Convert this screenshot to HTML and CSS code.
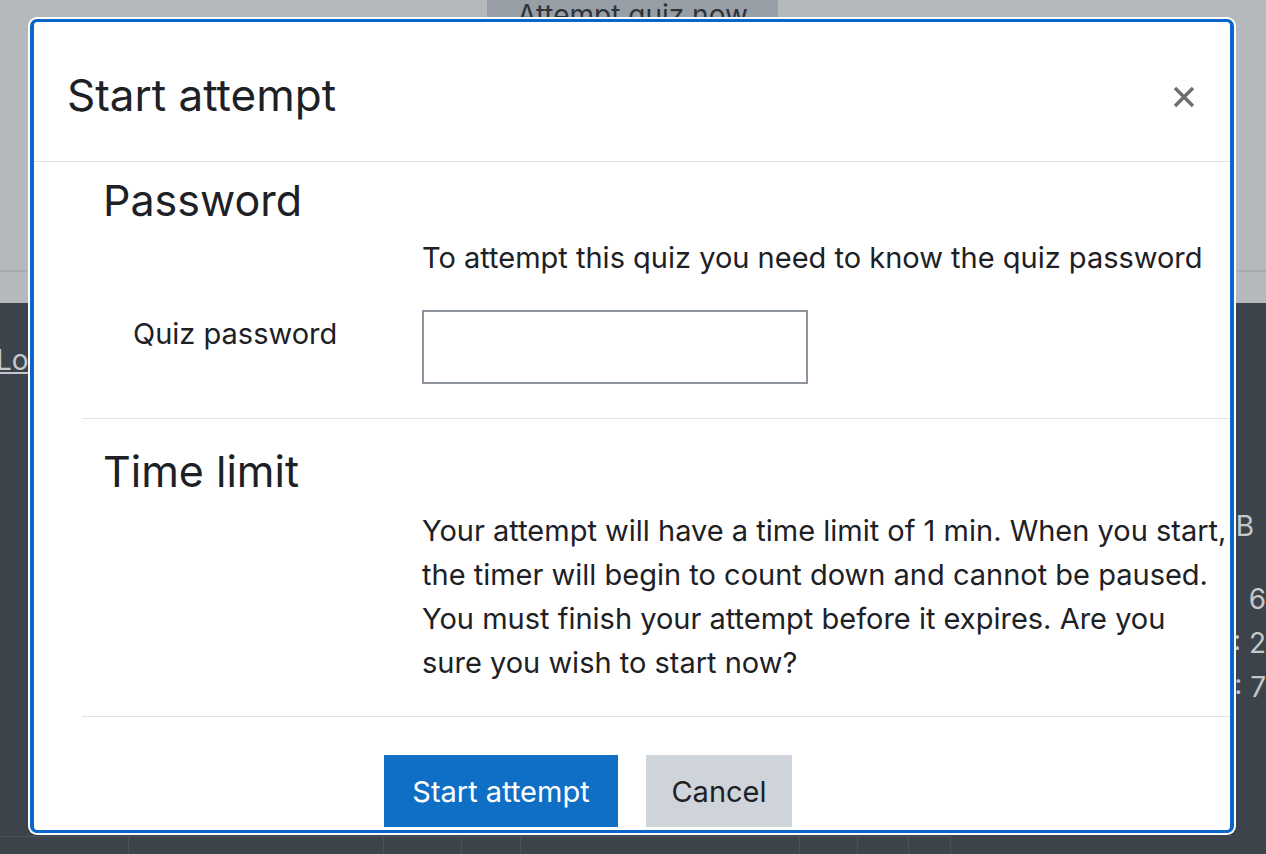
FILE: index.html
```html
<!DOCTYPE html>
<html lang="en">
<head>
  <meta charset="UTF-8" />
  <meta name="viewport" content="width=device-width, initial-scale=1.0" />
  <title>Quiz</title>
  <link rel="stylesheet" href="styles.css">
</head>
<body>
  <div class="page">
    <div class="page-top">
      <div class="attempt-btn">Attempt quiz now</div>
      <div class="top-line"></div>
    </div>
    <div class="page-dark">
      <div class="left-col">
        <a class="log-link">Log</a>
      </div>
      <div class="right-col">
        <div class="side-b">B</div>
        <div class="side-n">6</div>
        <div class="side-n">: 2</div>
        <div class="side-n">: 7</div>
      </div>
    </div>
    <div class="page-grid">
      <span class="c1"></span><span class="c2"></span><span class="c3"></span><span class="c4"></span><span class="c5"></span><span class="c6"></span><span class="c7"></span><span class="c8"></span>
    </div>
  </div>

  <div class="modal">
    <div class="modal-header">
      <h5 class="modal-title">Start attempt</h5>
      <button class="close">
        <svg width="22" height="22" viewBox="0 0 22 22">
          <path d="M2 2 L20 20 M20 2 L2 20" stroke="#6a6e73" stroke-width="3.4" fill="none"/>
        </svg>
      </button>
    </div>
    <div class="modal-body">
      <fieldset class="section">
        <h3 class="legend">Password</h3>
        <div class="row">
          <div class="label"></div>
          <div class="field"><p class="text">To attempt this quiz you need to know the quiz password</p></div>
        </div>
        <div class="row row-input">
          <div class="label"><label for="quizpassword">Quiz password</label></div>
          <div class="field"><input type="text" id="quizpassword" /></div>
        </div>
      </fieldset>
      <fieldset class="section">
        <h3 class="legend">Time limit</h3>
        <div class="row">
          <div class="label"></div>
          <div class="field">
            <p class="text">Your attempt will have a time limit of 1 min. When you start,<br>the timer will begin to count down and cannot be paused.<br>You must finish your attempt before it expires. Are you<br>sure you wish to start now?</p>
          </div>
        </div>
      </fieldset>
      <div class="buttons">
        <button class="btn btn-primary">Start attempt</button>
        <button class="btn btn-secondary">Cancel</button>
      </div>
    </div>
  </div>
</body>
</html>
```

FILE: styles.css
```css
body {
  margin: 0;
  font-family: 'Inter', 'Liberation Sans', sans-serif;
  color: #1d2125;
  background-color: #3d434a;
  height: 854px;
  overflow: hidden;
}
.page-top {
  height: 303px;
  background-color: #b6b9bc;
}
.attempt-btn {
  margin-left: 487px;
  width: 291px;
  height: 40px;
  background-color: #989ea6;
  color: #2e3338;
  font-size: 28px;
  text-align: center;
  line-height: 30px;
  overflow: hidden;
}
.top-line {
  margin-top: 230px;
  height: 2px;
  background-color: #a8acb0;
}
.page-dark {
  display: flex;
  justify-content: space-between;
  height: 533px;
  color: #c4c8cc;
  font-size: 28px;
}
.log-link {
  display: block;
  margin-top: 40px;
  margin-left: -4px;
  text-decoration: underline;
}
.right-col {
  padding-top: 206px;
  width: 40px;
  text-align: right;
}
.side-b {
  margin-bottom: 34px;
  margin-right: 12px;
}
.side-n {
  line-height: 44px;
}
.page-grid {
  display: flex;
  border-top: 1px solid #4b5158;
  height: 18px;
  width: 951px;
}
.page-grid span {
  border-right: 1px solid #4b5158;
  border-bottom: 1px solid #474d54;
}
.c1 { width: 129px; }
.c2 { width: 255px; }
.c3 { width: 77px; }
.c4 { width: 58px; }
.c5 { width: 279px; }
.c6 { width: 58px; }
.c7 { width: 50px; }
.c8 { width: 41px; }

.modal {
  position: absolute;
  left: 30px;
  top: 19px;
  width: 1204px;
  height: 814px;
  box-sizing: border-box;
  border: 4px solid #0a66c8;
  border-top-width: 3px;
  border-bottom-width: 3px;
  border-radius: 7px;
  box-shadow: 0 0 0 2px #ffffff;
  background-color: #ffffff;
  overflow: hidden;
}
.modal-header {
  display: flex;
  justify-content: space-between;
  align-items: center;
  height: 139px;
  padding: 0 35px 0 33px;
  border-bottom: 1px solid #dee2e6;
}
.modal-title {
  margin: 0;
  font-size: 44px;
  font-weight: 400;
  padding-top: 6px;
}
.close {
  background: none;
  border: none;
  padding: 0;
  margin-top: 13px;
  cursor: pointer;
}
.modal-body {
  padding-left: 48px;
  width: 1230px;
}
.section {
  margin: 0;
  padding: 0;
  border: none;
  border-bottom: 1px solid #dee2e6;
}
.legend {
  margin: 0;
  padding: 14px 0 0 21px;
  font-size: 43px;
  font-weight: 400;
  line-height: 48px;
}
.row {
  display: grid;
  grid-template-columns: 340px 1fr;
}
.text {
  margin: 0;
  font-size: 29px;
  line-height: 44px;
  white-space: nowrap;
}
.section:first-child .text {
  margin-top: 12px;
}
.row-input {
  align-items: start;
  margin-top: 30px;
  margin-bottom: 34px;
}
.label {
  padding-left: 51px;
  font-size: 29px;
}
.row-input .label {
  padding-top: 2px;
  line-height: 44px;
}
input[type="text"] {
  width: 386px;
  height: 74px;
  box-sizing: border-box;
  border: 2px solid #8f959e;
  font-size: 29px;
  display: block;
}
.section:nth-child(2) .legend {
  padding-top: 28px;
}
.section:nth-child(2) .row {
  margin-top: 14px;
  margin-bottom: 31px;
}
.buttons {
  display: flex;
  gap: 28px;
  padding: 38px 0 0 302px;
}
.btn {
  border: none;
  border-radius: 0;
  height: 72px;
  padding: 0;
  font-family: inherit;
  font-size: 29px;
  cursor: pointer;
}
.btn-primary {
  width: 234px;
  background-color: #0f6fc5;
  color: #ffffff;
}
.btn-secondary {
  width: 146px;
  background-color: #ced4da;
  color: #1d2125;
}
```
